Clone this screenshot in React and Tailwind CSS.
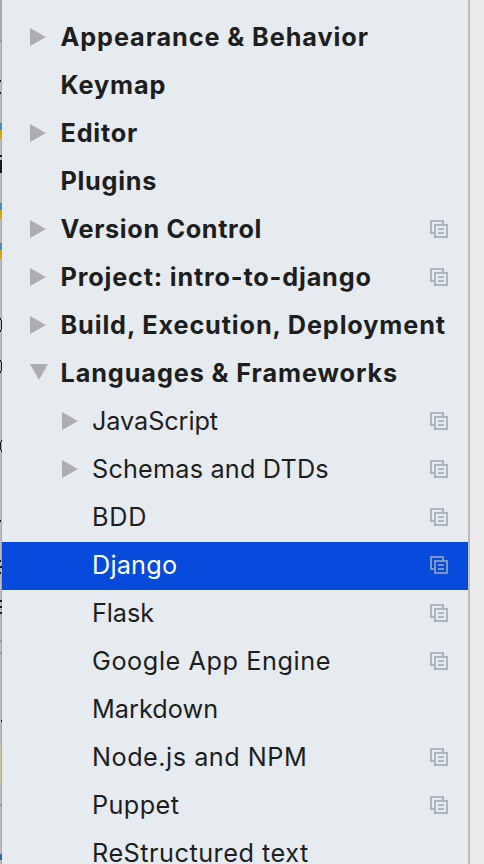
const rows = [
  { label: 'Appearance & Behavior', level: 0, arrow: 'right', tracking: 'tracking-[0.91px]' },
  { label: 'Keymap', level: 0, tracking: 'tracking-[0.85px]' },
  { label: 'Editor', level: 0, arrow: 'right', tracking: 'tracking-[0.8px]' },
  { label: 'Plugins', level: 0, tracking: 'tracking-[0.7px]' },
  { label: 'Version Control', level: 0, arrow: 'right', copy: true, tracking: 'tracking-[0.64px]' },
  { label: 'Project: intro-to-django', level: 0, arrow: 'right', copy: true, tracking: 'tracking-[0.82px]' },
  { label: 'Build, Execution, Deployment', level: 0, arrow: 'right', tracking: 'tracking-[0.87px]' },
  { label: 'Languages & Frameworks', level: 0, arrow: 'down', tracking: 'tracking-[0.9px]' },
  { label: 'JavaScript', level: 1, arrow: 'right', copy: true, tracking: 'tracking-[-0.08px]' },
  { label: 'Schemas and DTDs', level: 1, arrow: 'right', copy: true, tracking: 'tracking-[0.18px]' },
  { label: 'BDD', level: 1, copy: true, tracking: 'tracking-[0.7px]' },
  { label: 'Django', level: 1, copy: true, selected: true, tracking: 'tracking-[0.2px]' },
  { label: 'Flask', level: 1, copy: true, tracking: 'tracking-[-0.1px]' },
  { label: 'Google App Engine', level: 1, copy: true, tracking: 'tracking-[0.57px]' },
  { label: 'Markdown', level: 1, tracking: 'tracking-[0.03px]' },
  { label: 'Node.js and NPM', level: 1, copy: true, tracking: 'tracking-[0.5px]' },
  { label: 'Puppet', level: 1, copy: true, tracking: 'tracking-[0.4px]' },
  { label: 'ReStructured text', level: 1, tracking: 'tracking-[0.5px]' },
];

function Arrow({ direction }) {
  return (
    <svg className="block h-[18px] w-[18px]" viewBox="0 0 18 18" fill="#adadad">
      {direction === 'right' && <path d="M0 0L16 9L0 18Z" />}
      {direction === 'down' && <path d="M0 0H18L9 16Z" />}
    </svg>
  );
}

function CopyIcon({ selected }) {
  return (
    <svg
      className={`-mt-0.5 block size-[18px] ${selected ? 'text-[#7d96c0]' : 'text-[#a9b6be]'}`}
      viewBox="0 0 18 18"
      fill="currentColor"
      shapeRendering="crispEdges"
    >
      <path d="M0 0H14V4H12V2H2V12H4V14H0Z" />
      <path fillRule="evenodd" d="M4 4H18V18H4ZM6 6V16H16V6Z" />
      <path d="M8 8H14V10H8ZM8 12H14V14H8Z" />
    </svg>
  );
}

function Row({ label, level, arrow, copy, selected, tracking }) {
  return (
    <div
      className={`flex h-12 shrink-0 items-center pr-5 ${level ? 'pl-[60px]' : 'pl-7'} ${
        selected ? 'bg-[#064bdb] text-white' : 'text-[#1e1e1e]'
      }`}
    >
      <div className="-mt-0.5 w-[30px] shrink-0">
        <Arrow direction={arrow} />
      </div>
      <span
        className={`-mt-0.5 flex-1 whitespace-nowrap text-[25.25px] leading-8 ${
          level ? 'font-normal' : 'pl-[0.5px] font-bold'
        } ${tracking}`}
      >
        {label}
      </span>
      {copy && <CopyIcon selected={selected} />}
    </div>
  );
}

// Sliver of the editor window behind the dialog.
function EditorEdge() {
  return (
    <svg className="block h-[864px] w-0.5 shrink-0" viewBox="0 0 2 864" shapeRendering="crispEdges">
      <rect width="2" height="864" fill="#bdbdbf" />
      <rect width="2" height="41" fill="#aaaaac" />
      <rect x="1" width="1" height="864" fill="#a8a9ac" />
      <path d="M0 40h2v2H0zM0 640h2v2H0zM0 652h2v2H0zM0 804h2v2H0z" fill="#939496" />
      <path d="M0 80h1v2H0zM0 92h1v2H0zM0 155h2v2H0zM0 160h2v13H0zM0 318h1v2H0zM1 320h1v10H1zM0 330h1v2H0zM0 360h1v2H0zM1 362h1v9H1zM0 371h1v2H0zM0 442h1v8H0zM1 440h1v2H1zM1 450h1v2H1zM0 520h1v2H0zM0 560h1v2H0zM0 566h2v2H0zM0 572h1v2H0zM0 600h2v2H0zM0 606h2v2H0zM0 612h2v2H0zM1 720h1v2H1z" fill="#191a1d" />
      <path d="M0 123h2v7H0zM0 203h2v7H0zM0 243h2v7H0z" fill="#4190ba" />
      <path d="M0 130h2v9H0zM0 210h2v9H0zM0 250h2v9H0z" fill="#d3a614" />
      <path d="M0 743h1v41H0z" fill="#cdc8a5" />
      <path d="M0 854h2v6H0z" fill="#2b66a8" />
    </svg>
  );
}

export default function App() {
  return (
    <div className="flex h-[864px] w-[484px] overflow-hidden bg-[#ebebeb] font-['Inter',sans-serif]">
      <EditorEdge />
      <div className="flex w-[466px] shrink-0 flex-col overflow-hidden bg-[#e5ebef] pt-3.5">
        {rows.map((row) => (
          <Row key={row.label} {...row} />
        ))}
      </div>
      <div className="w-0.5 shrink-0 bg-[#bdbdbd]" />
    </div>
  );
}
